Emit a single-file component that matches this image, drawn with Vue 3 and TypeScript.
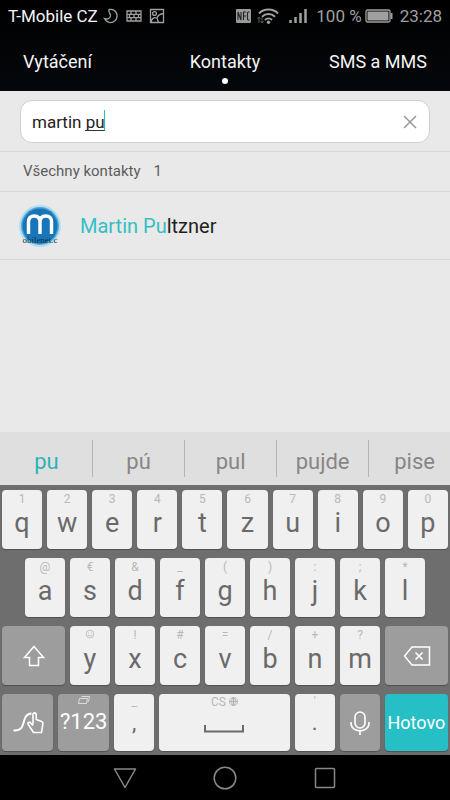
<script setup lang="ts">
import { ref } from 'vue'

interface Key {
  label: string
  hint: string
}

const toKeys = (letters: string, hints: string[]): Key[] =>
  letters.split('').map((label, i) => ({ label, hint: hints[i] }))

const query = ref('martin pu')
const tabs = ['Vytáčení', 'Kontakty', 'SMS a MMS']
const suggestions = ['pu', 'pú', 'pul', 'pujde', 'pise']
const topRow = toKeys('qwertzuiop', ['1', '2', '3', '4', '5', '6', '7', '8', '9', '0'])
const homeRow = toKeys('asdfghjkl', ['@', '€', '&', '_', '(', ')', ':', ';', '*'])
const bottomRow = toKeys('yxcvbnm', ['', '!', '#', '=', '/', '+', '?'])
</script>

<template>
  <div class="phone">
    <header class="header">
      <div class="status">
        <span class="carrier">T-Mobile CZ</span>
        <svg class="moon" width="16" height="16" viewBox="0 0 16 16" aria-hidden="true">
          <path d="M6 1.500A6.600 6.600 0 1 1 1.500 10.500C5 12 8 9.500 7.500 7 7 5 5 4 6 1.500z" />
        </svg>
        <svg class="wall" width="16" height="12" viewBox="0 0 16 12" aria-hidden="true">
          <path d="M1 1h14v10H1zM1 4.300h14M1 7.700h14M5 1v3.300M10 1v3.300M3.500 4.300v3.400M8 4.300v3.400M12.500 4.300v3.400M5 7.700V11M10 7.700V11" />
        </svg>
        <svg class="photo" width="16" height="16" viewBox="0 0 16 16" aria-hidden="true">
          <path d="M1.500 1.500h13v13h-13zM2 14.500c.5-4 3-5.500 5.500-4.500 1.500.6 1 2.500 2 4.500M8 10c1-3 3-4 6.500-4.500" />
          <circle cx="5.500" cy="5.500" r="1.900" />
        </svg>
        <span class="spacer"></span>
        <svg width="16" height="16" viewBox="0 0 16 16" aria-hidden="true">
          <rect x="0" y="1" width="15" height="14" rx="1" fill="#9a9a9a" />
          <path d="M2 12V4l3 8V4M7.500 12V4H10M7.500 8H10M13.500 4H12.500q-1 0-1 1v6q0 1 1 1h1" fill="none" stroke="#222" stroke-width="1.100" />
        </svg>
        <svg class="wifi" width="24" height="18" viewBox="0 0 24 18" aria-hidden="true">
          <g fill="none" stroke="#a0a0a0" stroke-width="2">
            <path d="M3 6.500c5-5.200 14-5.200 19 0" />
            <path d="M6 9.800c3.500-3.600 9.500-3.600 13 0" />
            <path d="M9 13c2-2 5-2 7 0" />
          </g>
          <circle cx="12.500" cy="15.300" r="1.700" fill="#a0a0a0" />
          <path d="M3 16V10M1.500 12 3 10l1.500 2M6 10v6M4.800 14 6 16l1.500-2" fill="none" stroke="#555" />
        </svg>
        <svg class="signal" width="20" height="16" viewBox="0 0 20 16" aria-hidden="true">
          <path d="M2.500 15v-3M7.500 15V9M12.500 15V5M17.500 15V1" fill="none" stroke="#a0a0a0" stroke-width="2.500" />
        </svg>
        <span class="muted">100 %</span>
        <svg class="battery" width="28" height="14" viewBox="0 0 28 14" aria-hidden="true">
          <rect x="1" y="1" width="24" height="12" rx="1.500" fill="none" stroke="#a0a0a0" stroke-width="1.300" />
          <rect x="2.500" y="2.500" width="21" height="9" fill="#a0a0a0" />
          <path d="M25.500 4h2v6h-2z" fill="#a0a0a0" />
        </svg>
        <span class="muted clock">23:28</span>
      </div>
      <nav class="tabs">
        <a v-for="(tab, i) in tabs" :key="tab" href="#" class="tab" :class="{ active: i === 1 }">{{ tab }}</a>
      </nav>
    </header>

    <main class="content">
      <div class="search-row">
        <div class="search">
          <input v-model="query" class="search-input" type="text" aria-label="Hledat kontakty" />
          <span class="composing"></span>
          <button class="clear" type="button" aria-label="Vymazat">
            <svg width="14" height="14" viewBox="0 0 14 14"><path d="M1 1l12 12M13 1 1 13" fill="none" stroke="#999" stroke-width="1.500" /></svg>
          </button>
        </div>
      </div>
      <h2 class="section"><span>Všechny kontakty</span><span>1</span></h2>
      <a href="#" class="contact">
        <svg class="avatar" width="44" height="44" viewBox="0 0 44 44" aria-hidden="true">
          <circle cx="22" cy="22" r="21" fill="#b5dcef" />
          <circle cx="22" cy="22" r="19" fill="#4ba8db" />
          <circle cx="22" cy="22" r="17.500" fill="#1876b8" />
          <path d="M10.500 30V18q0-6 5.700-6t5.800 6v12M22 18q0-6 5.800-6t5.700 6v12" fill="none" stroke="#fff" stroke-width="3.400" />
          <text x="22" y="39" text-anchor="middle" font-family="Liberation Serif, serif" font-size="9" fill="#172d40">obilenet.c</text>
        </svg>
        <span class="name"><span class="match">Martin Pu</span>ltzner</span>
      </a>
    </main>

    <div class="suggestions">
      <button v-for="(word, i) in suggestions" :key="word" type="button" class="suggestion" :class="{ primary: i === 0 }">{{ word }}</button>
    </div>

    <section class="keyboard">
      <div class="row row-top">
        <button v-for="key in topRow" :key="key.label" type="button" class="key">
          <span class="hint">{{ key.hint }}</span><span class="letter">{{ key.label }}</span>
        </button>
      </div>
      <div class="row row-home">
        <button v-for="key in homeRow" :key="key.label" type="button" class="key">
          <span class="hint">{{ key.hint }}</span><span class="letter">{{ key.label }}</span>
        </button>
      </div>
      <div class="row row-bottom">
        <button type="button" class="key dark" aria-label="Shift">
          <svg width="22" height="22" viewBox="0 0 22 22"><path d="M11 1.500 20.500 12.500H15.500V20.500H6.500V12.500H1.500z" fill="none" stroke="#fff" stroke-width="1.500" /></svg>
        </button>
        <button v-for="key in bottomRow" :key="key.label" type="button" class="key">
          <span class="hint">
            <svg v-if="!key.hint" class="smile" width="10" height="10" viewBox="0 0 10 10">
              <circle cx="5" cy="5" r="3.800" fill="none" stroke="#c0c0c0" />
              <path d="M3.500 3.500v1M6.500 3.500v1M3 6q2 2 4 0" fill="none" stroke="#c0c0c0" />
            </svg>
            <template v-else>{{ key.hint }}</template>
          </span>
          <span class="letter">{{ key.label }}</span>
        </button>
        <button type="button" class="key dark" aria-label="Smazat">
          <svg width="28" height="20" viewBox="0 0 28 20">
            <path d="M9 1H26.500V19H9L1.500 10z" fill="none" stroke="#fff" stroke-width="1.500" />
            <path d="M12.500 6.500l7 7M19.500 6.500l-7 7" fill="none" stroke="#fff" stroke-width="1.700" />
          </svg>
        </button>
      </div>
      <div class="row row-space">
        <button type="button" class="key dark" aria-label="Psaní tahem">
          <svg width="32" height="24" viewBox="0 0 32 24" fill="none" stroke="#fff">
            <path d="M1.500 19.500c5 .5 8-1 9.500-6s2-10.500 8.500-11" stroke-width="2" />
            <path d="M21 13.500V3q1.600-2.200 3.200 0V8.500l5.500 2q1.400.6 1.200 2.200L29.500 21.500H21.500L16 13q-.2-2.300 2-1.700L21 14.500" stroke-width="1.600" stroke-linejoin="round" />
          </svg>
        </button>
        <button type="button" class="key dark symbols">
          <span class="hint">
            <svg width="12" height="8" viewBox="0 0 12 8"><path d="M3.500.5h8l-1 5h-1M1.500 2.500h8l-1 5h-8z" fill="none" stroke="#ddd" /></svg>
          </span>
          <span class="word">?123</span>
        </button>
        <button type="button" class="key">
          <span class="hint">_</span><span class="letter">,</span>
        </button>
        <button type="button" class="key" aria-label="Mezerník">
          <span class="hint">CS
            <svg width="9" height="9" viewBox="0 0 9 9"><path d="M4.500.5a4 4 0 1 0 .01 0M.5 4.500h8M4.500.5v8M4.500.5q-4 4 0 8q4-4 0-8" fill="none" stroke="#b4b4b4" /></svg>
          </span>
          <svg class="bar" width="40" height="8" viewBox="0 0 40 8"><path d="M1 0v6.500h38V0" fill="none" stroke="#6a6a6a" stroke-width="2" /></svg>
        </button>
        <button type="button" class="key">
          <span class="hint">'</span><span class="letter">.</span>
        </button>
        <button type="button" class="key dark" aria-label="Hlasové zadávání">
          <svg width="20" height="24" viewBox="0 0 20 24" fill="none" stroke="#fff" stroke-width="1.600">
            <rect x="5" y="1" width="10" height="16" rx="5" />
            <path d="M1 11v1c0 10.500 18 10.500 18 0v-1M10 20v4" />
          </svg>
        </button>
        <button type="button" class="key done">Hotovo</button>
      </div>
    </section>

    <nav class="system">
      <button type="button" aria-label="Zpět">
        <svg width="24" height="24" viewBox="0 0 24 24"><path d="M1.500 3h21L12 21.500z" stroke-linejoin="round" /></svg>
      </button>
      <button type="button" aria-label="Domů">
        <svg width="24" height="24" viewBox="0 0 24 24"><circle cx="12" cy="12" r="10.800" /></svg>
      </button>
      <button type="button" aria-label="Přehled">
        <svg width="24" height="24" viewBox="0 0 24 24"><rect x="2.500" y="2.500" width="19" height="19" rx="1" /></svg>
      </button>
    </nav>
  </div>
</template>

<style>
body {
  margin: 0;
  background: #000;
}
</style>

<style scoped>
.phone {
  display: flex;
  flex-direction: column;
  min-height: 100vh;
  background: #e9e9e9;
  font-family: Roboto, "Liberation Sans", sans-serif;
}
button {
  border: 0;
  padding: 0;
  background: none;
  font-family: inherit;
}
a {
  color: inherit;
  text-decoration: none;
}
.header {
  background: linear-gradient(#000, #04070b);
  color: #f4f4f4;
}
.status {
  display: flex;
  align-items: center;
  height: 32px;
  padding: 0 8px;
  font-size: 17px;
}
.moon,
.wall,
.photo {
  fill: none;
  stroke: #a0a0a0;
  stroke-width: 1.3;
}
.moon {
  margin-left: 5px;
}
.wall {
  margin-left: 7px;
}
.photo {
  margin-left: 7px;
}
.spacer {
  flex: 1;
}
.wifi {
  margin-left: 4px;
}
.signal {
  margin: 0 8px;
}
.muted {
  color: #a0a0a0;
}
.battery {
  margin: 0 7px 0 3px;
}
.tabs {
  display: grid;
  grid-template-columns: 1fr auto 1fr;
  height: 59px;
  padding: 0 23px;
  font-size: 18px;
  line-height: 60px;
}
.tab:last-child {
  text-align: right;
}
.tab.active {
  position: relative;
}
.tab.active::after {
  content: "";
  position: absolute;
  left: 50%;
  bottom: 8px;
  width: 6px;
  height: 6px;
  margin-left: -3px;
  border-radius: 50%;
  background: #fff;
}
.content {
  flex: 1;
}
.search-row {
  padding: 9px 20px 8px;
  border-bottom: 1px solid #d6d6d6;
}
.search {
  position: relative;
  display: flex;
  align-items: center;
  height: 41px;
  padding: 0 12px 0 11px;
  border: 1px solid #d0d0d0;
  border-radius: 12px;
  background: #fff;
}
.search-input {
  flex: 1;
  min-width: 0;
  padding: 0;
  border: 0;
  outline: 0;
  background: none;
  color: #222;
  font-family: inherit;
  font-size: 17px;
}
.composing {
  position: absolute;
  left: 64px;
  top: 9px;
  width: 19px;
  height: 20px;
  border-right: 1px solid #2bbfc4;
  border-bottom: 1px solid #333;
}
.clear {
  display: flex;
}
.section {
  display: flex;
  gap: 13px;
  margin: 0;
  padding: 0 23px;
  border-bottom: 1px solid #d6d6d6;
  color: #5c5c5c;
  font-size: 15px;
  font-weight: 400;
  line-height: 39px;
}
.contact {
  display: flex;
  align-items: center;
  gap: 18px;
  height: 67px;
  padding: 0 18px;
  border-bottom: 1px solid #d6d6d6;
  color: #1e1e1e;
  font-size: 20px;
}
.match {
  color: #34bfc4;
}
.suggestions {
  display: grid;
  grid-template-columns: repeat(5, 20.5%);
  align-items: center;
  height: 53px;
  padding-left: 1px;
  overflow: hidden;
  background: #dfdfdf;
}
.suggestion {
  height: 37px;
  padding-top: 6px;
  border-right: 1px solid #b4b4b4;
  color: #868686;
  font-size: 22px;
  line-height: 31px;
}
.suggestion.primary {
  color: #2bb5b8;
}
.keyboard {
  display: grid;
  gap: 9px;
  padding: 5px 2px 4px;
  background: #6e6e6e;
}
.row {
  display: grid;
  gap: 5px;
  height: 59px;
}
.row-top {
  grid-template-columns: repeat(10, minmax(0, 1fr));
}
.row-home {
  grid-template-columns: repeat(9, minmax(0, 1fr));
  padding: 0 23px;
}
.row-bottom {
  grid-template-columns: minmax(0, 63fr) repeat(7, minmax(0, 40fr)) minmax(0, 63fr);
}
.row-space {
  grid-template-columns:
    minmax(0, 51fr) minmax(0, 51fr) minmax(0, 40fr) minmax(0, 130fr)
    minmax(0, 40fr) minmax(0, 40fr) minmax(0, 63fr);
  height: 57px;
}
.key {
  display: flex;
  flex-direction: column;
  align-items: center;
  justify-content: flex-start;
  border-radius: 4px;
  background: #f0f0f0;
  box-shadow: 0 1px 1px #505050;
  color: #6a6a6a;
}
.hint {
  height: 18px;
  color: #b8b8b8;
  font-size: 12px;
  line-height: 19px;
}
.letter {
  font-size: 27px;
  line-height: 30px;
}
.row-space .letter {
  font-size: 22px;
  line-height: 22px;
}
.row-space .hint {
  line-height: 17px;
}
.key.dark {
  justify-content: center;
  background: #9d9d9d;
  color: #fff;
}
.key.symbols {
  justify-content: flex-start;
}
.row-space .symbols .hint {
  line-height: 12px;
}
.word {
  font-size: 22px;
  line-height: 20px;
}
.bar {
  margin-top: 13px;
}
.key.done {
  justify-content: center;
  background: #26bfc6;
  color: #fff;
  font-size: 18px;
}
.system {
  display: flex;
  align-items: center;
  justify-content: center;
  gap: 76px;
  height: 45px;
  background: #000;
}
.system button {
  display: flex;
}
.system svg {
  fill: none;
  stroke: #888;
  stroke-width: 1.5;
}
</style>
